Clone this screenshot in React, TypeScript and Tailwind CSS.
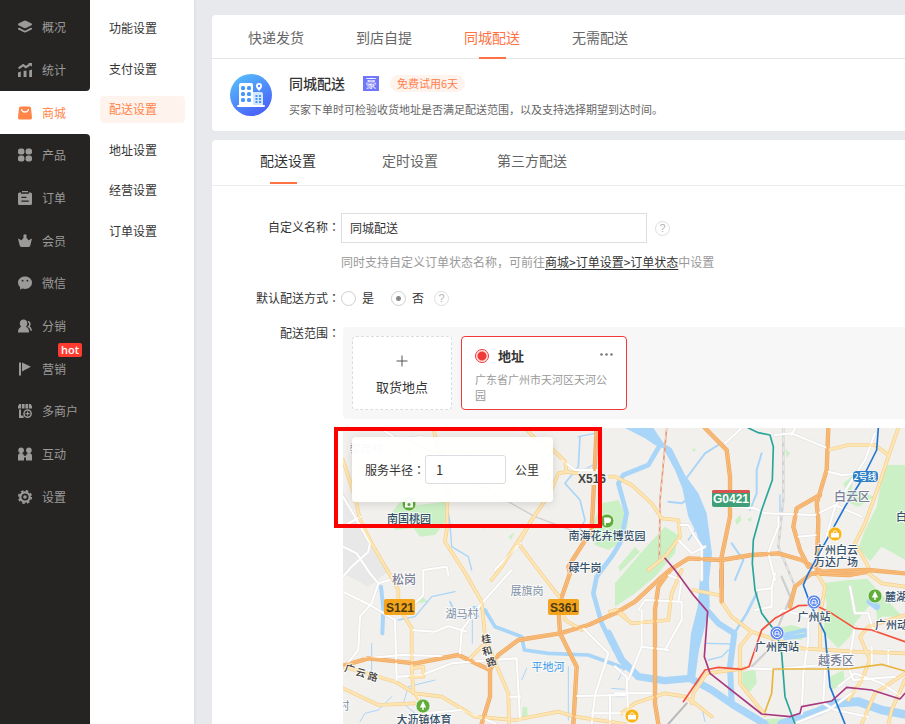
import { useState } from 'react'
import type { ReactNode } from 'react'
import clsx from 'clsx'

type NavItem = {
  label: string
  icon: ReactNode
  badge?: string
}

type RoadKind = 'highway' | 'main' | 'street'

type MapLabel = {
  text: string
  x: number
  y: number
  kind: 'poi' | 'area' | 'village' | 'river' | 'road'
  anchor?: 'start' | 'middle'
  rotate?: number
}

const navItems: NavItem[] = [
  {
    label: '概况',
    icon: (
      <>
        <path d="M5.500.9a3.400 3.400 0 0 1 3 0l5 2.700a.9.9 0 0 1 0 1.600l-5 2.600a3.400 3.400 0 0 1-3 0l-5-2.600a.9.9 0 0 1 0-1.600Z" />
        <path d="M.9 8.700 5.400 11a3.400 3.400 0 0 0 3.200 0l4.500-2.300" fill="none" stroke="currentColor" strokeWidth="1.900" strokeLinecap="round" />
      </>
    )
  },
  {
    label: '统计',
    icon: (
      <>
        <path d="M.6 5.400 5.200 2.200l2.600 1.900L12.400 1.200" fill="none" stroke="currentColor" strokeWidth="2.200" />
        <path d="M10 0h4v3.800ZM0 9.400 2.800 8.400V14H0ZM5.600 7.800h2.900V14H5.600ZM11.200 7.400l2.800-1V14h-2.800Z" />
      </>
    )
  },
  {
    label: '商城',
    icon: (
      <>
        <path d="M2.600.6h8.800a1.600 1.600 0 0 1 1.600 1.500l1 9.400a2 2 0 0 1-2 2.100H2a2 2 0 0 1-2-2.100l1-9.400A1.600 1.600 0 0 1 2.600.6Z" />
        <path d="M3.600 3.600c.9 3.200 5.900 3.200 6.800 0" fill="none" stroke="#fff" strokeWidth="1.300" strokeLinecap="round" />
      </>
    )
  },
  {
    label: '产品',
    icon: (
      <>
        <rect x="0" y="0.4" width="6.4" height="6.2" rx="2.4" />
        <rect x="7.6" y="0.4" width="6.4" height="6.2" rx="2.4" />
        <rect x="0" y="7.4" width="6.4" height="6.2" rx="2.4" />
        <rect x="7.6" y="7.4" width="6.4" height="6.2" rx="2.4" />
      </>
    )
  },
  {
    label: '订单',
    icon: (
      <>
        <path d="M4 0h6v1.400h2.400A1.600 1.600 0 0 1 14 3v9.400a1.600 1.600 0 0 1-1.600 1.600H1.600A1.600 1.600 0 0 1 0 12.400V3a1.600 1.600 0 0 1 1.600-1.600H4Z" />
        <path d="M3 2h8M3.400 6.300h5M3.400 10.200h7.400" stroke="#262422" strokeWidth="1.300" />
      </>
    )
  },
  {
    label: '会员',
    icon: (
      <>
        <circle cx="7" cy="2" r="1.700" />
        <path d="M0 4.400 3.600 6.300 6 3h2l2.400 3.300L14 4.400l-1.700 7.200a1.800 1.800 0 0 1-1.700 1.400H3.400a1.800 1.800 0 0 1-1.700-1.400Z" />
      </>
    )
  },
  {
    label: '微信',
    icon: (
      <>
        <path d="M7 .6c3.900 0 7 2.700 7 6.100s-3.100 6.200-7 6.200c-1 0-2-.2-2.800-.5L2.200 13.800l-.1-2.600A5.800 5.800 0 0 1 0 6.700C0 3.300 3.100.6 7 .6Z" />
        <circle cx="4.6" cy="4.700" r=".9" fill="#262422" />
        <circle cx="9.400" cy="4.700" r=".9" fill="#262422" />
      </>
    )
  },
  {
    label: '分销',
    icon: (
      <>
        <path d="M5.600.4c2.200 0 3.700 1.600 3.700 3.800 0 1.500-.6 2.800-1.500 3.600 2.200.7 3.300 2.400 3.300 5.700H0c0-3.300 1.200-5 3.300-5.700-.9-.8-1.500-2.100-1.500-3.600C1.800 2 3.400.4 5.600.4Z" />
        <path d="M9.800 2.400c2.700.6 2.600 3.600.8 5.100 1.700.8 2.500 2.100 2.700 4.200" fill="none" stroke="currentColor" strokeWidth="1.500" />
      </>
    )
  },
  {
    label: '营销',
    badge: 'hot',
    icon: <path d="M1 .4h2v13.200H1ZM4 .4 13 4.700 4 9.600Z" />
  },
  {
    label: '多商户',
    icon: (
      <>
        <path d="M1.200 0h1.900v4.600H0V2.500ZM3.900 0h2.700v4.600H3.900ZM7.400 0h2.700v4.600H7.400ZM10.900 0h1.900L14 2.500v2.100h-3.100ZM1 5.400h2v6.200h2.600V14H1Z" />
        <circle cx="9.600" cy="9.600" r="3.600" fill="none" stroke="currentColor" strokeWidth="1.500" />
        <path d="M9.600 7.600v4M7.600 9.600h4" stroke="currentColor" strokeWidth="1.200" />
      </>
    )
  },
  {
    label: '互动',
    icon: (
      <>
        <circle cx="3.100" cy="3.200" r="2.800" />
        <circle cx="10.900" cy="3.200" r="2.800" />
        <path d="M0 9.500a3 3 0 0 1 6-.8h2a3 3 0 0 1 6 .8v4H8v-3H6v3H0Z" />
      </>
    )
  },
  {
    label: '设置',
    icon: (
      <>
        <circle cx="7" cy="7" r="4.700" fill="none" stroke="currentColor" strokeWidth="2.200" />
        <circle cx="7" cy="7" r="6.200" fill="none" stroke="currentColor" strokeWidth="1.700" strokeDasharray="2.600 2.270" />
        <circle cx="7" cy="7" r="1.800" />
      </>
    )
  }
]

const subItems = ['功能设置', '支付设置', '配送设置', '地址设置', '经营设置', '订单设置']
const deliveryTabs = ['快递发货', '到店自提', '同城配送', '无需配送']
const settingTabs = ['配送设置', '定时设置', '第三方配送']

// Map geometry, drawn on a grid three times finer than the screen
const parks = [
  'M160 290 200 240 250 255 330 245 335 300 300 345 255 350 235 325 180 330Z',
  'M375 110 400 95 440 120 430 140Z',
  'M770 320 800 250 850 240 880 300 870 360 820 390 780 375Z',
  'M840 490 925 390 990 320 1030 345 1020 400 960 470 900 520 840 560Z',
  'M1648 135 1710 135 1710 870 1650 850 1610 430 1570 385 1590 330 1625 260Z',
  'M1460 490 1540 480 1630 475 1600 560 1560 610 1545 650 1510 685 1465 640 1475 550Z',
  'M1222 755 1262 750 1265 790 1245 815 1222 800Z',
  'M1485 770 1525 750 1530 790 1490 810Z',
  'M1285 898 1365 893 1365 915 1280 915Z',
  'M1525 190 1555 165 1550 210 1620 230 1570 260 1545 250Z',
  'M245 550 255 525 280 545Z',
  'M563 860 577 862 577 895 560 900Z',
  'M1595 720 1625 705 1680 710 1665 735 1610 735Z',
  'M1325 625 1370 615 1420 630 1400 660 1340 655Z',
  'M855 455 850 440 900 380 915 395Z',
  'M1200 300 1215 285 1220 300 1205 315Z',
  'M1070 90 1082 84 1080 96Z',
  'M520 350 540 335 528 360Z',
  'M1350 85 1365 100 1355 115Z',
  'M1235 300 1250 290 1248 305Z',
  'M440 320 450 316 446 328Z'
]

// The built-up strip east of the hill park, laid over the green
const parkCutouts = [
  'M1655 450 1712 450 1712 490 1660 490Z',
  'M1640 590 1712 590 1712 915 1560 915 1575 650Z',
  'M1600 430 1640 380 1712 420 1712 600 1600 480Z'
]

const riverBanks = [
  'M870 24 930 55 960 75 985 85 1020 150 1042 205 1060 290 1085 340 1103 400 1095 470 1088 560 1068 640 1056 770 1080 778 1092 690 1112 610 1124 560 1122 480 1131 400 1115 280 1090 220 1050 165 1010 85 985 68 955 24Z'
]

const rivers = [
  { d: 'M820 640 860 720 910 770 990 782 1065 775 1130 810 1195 855 1290 912', width: 22 },
  { d: 'M975 75 940 135 865 165 850 190 875 280 855 370 830 410 785 470 775 520 800 610 840 690', width: 14 },
  { d: 'M1115 570 1150 610 1198 640 1185 740 1190 850', width: 18 },
  { d: 'M1198 640 1235 580 1265 520', width: 8 },
  { d: 'M450 570 480 620 560 650 568 690 640 700 760 705 870 745', width: 11 },
  { d: 'M1050 180 1110 100 1150 75', width: 6 },
  { d: 'M1060 235 1040 250 1000 245', width: 6 },
  { d: 'M1280 100 1265 150 1265 220 1245 270', width: 6 },
  { d: 'M1190 370 1225 420 1200 480', width: 6 },
  { d: 'M1095 310 1060 360', width: 4 },
  { d: 'M1345 645 1390 635 1410 630 1420 645 1350 655', width: 12 },
  { d: 'M1340 912 1450 875 1500 850 1570 845 1640 870 1720 885', width: 26 },
  { d: 'M1605 545 1625 560', width: 20 },
  { d: 'M150 30 200 70 240 120', width: 4 },
  { d: 'M735 50 730 140 690 190 735 240 750 300 735 330', width: 5 },
  { d: 'M730 50 780 40M735 155 775 135', width: 4 },
  { d: 'M620 110 640 170 625 200', width: 4 },
  { d: 'M335 245 345 310 350 380 400 410 410 450', width: 4 },
  { d: 'M138 500 145 565 142 640', width: 12 },
  { d: 'M190 600 240 590 290 530 360 515', width: 4 },
  { d: 'M345 545 365 590 430 590 415 560 455 570', width: 5 },
  { d: 'M412 600 412 670M110 670 110 760M300 780 220 800 205 850 240 880', width: 3 },
  { d: 'M700 740 700 900M575 745 560 780M830 805 868 808M840 830 865 830', width: 3 },
  { d: 'M1335 225 1335 290M1115 670 1190 672M1120 720 1160 710 1180 690', width: 4 },
  { d: 'M75 905 90 880 130 870 170 830', width: 3 },
  { d: 'M1060 840 1100 865M870 740 850 780M1100 860 1110 905', width: 3 }
]

const roads: { d: string; kind: RoadKind }[] = [
  { kind: 'street', d: 'M24 230 60 290 105 370 100 395 50 440 24 470' },
  { kind: 'street', d: 'M40 310 78 290M24 380 65 400 105 460 130 490 165 480' },
  { kind: 'street', d: 'M110 80 180 110 200 150 215 210M135 24 190 60 260 50' },
  { kind: 'street', d: 'M24 515 105 555 180 600 185 780' },
  { kind: 'street', d: 'M130 490 110 550 75 590 70 690 30 740' },
  { kind: 'street', d: 'M265 450 265 525 225 565M265 450 335 440 340 465' },
  { kind: 'street', d: 'M530 450 440 550 380 630 375 700M230 630 300 635 340 618 395 635' },
  { kind: 'street', d: 'M190 770 260 765 350 730 545 715 555 900M90 715 200 705 320 708' },
  { kind: 'street', d: 'M250 830 270 880 380 870 480 910M525 830 555 830' },
  { kind: 'street', d: 'M725 828 870 825M770 912 780 825 820 700 740 620M825 825 825 912M770 880 870 880' },
  { kind: 'street', d: 'M555 370 480 450M680 120 720 150 790 150' },
  { kind: 'street', d: 'M1170 70 1220 24M1320 45 1370 40 1480 85M1370 45 1380 24' },
  { kind: 'street', d: 'M1480 155 1520 165 1590 160M1190 260 1260 265 1290 280 1440 285 1500 255 1580 290' },
  { kind: 'street', d: 'M1620 40 1590 120 1500 260 1460 400 1435 450' },
  { kind: 'street', d: 'M1330 290 1330 320 1310 370 1300 400 1320 480M1390 350 1445 345' },
  { kind: 'street', d: 'M1030 315 1060 315 1080 350 1100 380 1100 480M1030 360 1070 400 1110 380' },
  { kind: 'street', d: 'M840 740 875 770 880 900M840 820 950 820M910 570 930 540 1040 545 1040 600 990 690' },
  { kind: 'street', d: 'M920 570 920 680 880 780M920 680 1000 690M1000 465 1040 480 1030 545' },
  { kind: 'street', d: 'M1265 510 1310 505 1320 460M1310 505 1310 560 1260 570' },
  { kind: 'street', d: 'M1420 600 1420 660 1405 760 1400 880M1230 745 1320 748 1460 735' },
  { kind: 'street', d: 'M1470 745 1465 850 1500 870 1600 890M1540 740 1555 780 1680 770' },
  { kind: 'street', d: 'M1510 800 1560 760 1640 790 1700 830M1380 910 1480 870 1570 805' },
  { kind: 'street', d: 'M1545 500 1560 580 1600 580 1615 630M1540 740 1560 620' },
  { kind: 'street', d: 'M1320 600 1340 570 1420 590M1610 680 1610 740M1660 690 1660 740' },

  { kind: 'main', d: 'M24 120 60 230 75 300 110 370 165 465 190 510 190 560 230 625 230 740 235 820' },
  { kind: 'main', d: 'M295 24 310 90 340 130 335 330 330 365 385 450 440 545 450 650 490 750 520 820 522 912' },
  { kind: 'main', d: 'M570 24 605 60 650 85 690 125 695 155 670 160 645 220 590 300 550 370 610 450 680 540 690 600 740 630' },
  { kind: 'main', d: 'M690 155 800 170 840 170 890 195 950 250 980 295 1030 300 1035 350 990 410 940 450' },
  { kind: 'main', d: 'M590 300 500 440 470 480' },
  { kind: 'main', d: 'M24 740 60 750 180 785 240 820 320 830 420 890 540 900 670 875 720 890 870 912' },
  { kind: 'main', d: 'M24 805 130 855 240 850M400 720 450 670M240 820 265 860 265 912' },
  { kind: 'main', d: 'M230 745 265 740 265 770 225 770M825 575 850 570 870 590' },
  { kind: 'main', d: 'M840 570 890 610 1000 600 1010 520 1040 450M1075 510 1150 525' },
  { kind: 'main', d: 'M1480 90 1540 75 1620 75 1660 105M1690 24 1660 110 1630 200 1590 310 1560 370 1600 440' },
  { kind: 'main', d: 'M1160 545 1190 590 1250 635 1215 680 1215 790 1290 885' },
  { kind: 'main', d: 'M1250 635 1400 685 1560 695 1710 700M1455 560 1455 685M1600 460 1640 490 1710 500' },
  { kind: 'main', d: 'M1710 585 1600 620 1575 650 1605 720 1580 780 1540 840M1710 760 1620 820 1580 912' },
  { kind: 'main', d: 'M1710 780 1670 870 1660 912M860 880 900 850 990 820 1050 830 1080 850 1130 890' },
  { kind: 'main', d: 'M1070 850 1075 820 1115 760 1230 745M1445 460 1470 500 1460 560' },

  { kind: 'highway', d: 'M785 24 775 230 770 330 700 440 705 460 670 560 675 640 725 740 715 912' },
  { kind: 'highway', d: 'M24 737 100 715 240 730 370 705 465 750 490 705 550 660 675 640 760 615 840 580 900 545 970 480 1005 450 1060 415 1160 420 1250 405 1330 400 1400 420 1460 455 1600 450 1710 460' },
  { kind: 'highway', d: 'M465 750 465 830 440 912' },
  { kind: 'highway', d: 'M1110 24 1175 90 1185 170 1185 290 1160 410 1160 545' },
  { kind: 'highway', d: 'M1480 24 1475 150 1445 250 1450 300 1445 460' },
  { kind: 'highway', d: 'M1455 225 1385 265 1375 320 1395 390 1420 440' },
  { kind: 'highway', d: 'M1005 450 970 500 960 570 960 850 970 912' },
  { kind: 'highway', d: 'M1365 560 1380 500 1430 460 1540 465 1600 455' }
]

const metroLines = [
  { color: '#2aa59a', d: 'M1240 24 1270 38 1305 45 1315 80 1312 180 1280 270 1255 360 1252 430 1260 510 1280 580 1325 640 1340 700 1350 830 1380 912' },
  { color: '#2376d2', d: 'M1630 24 1625 90 1580 180 1530 260 1420 460 1405 495 1425 550 1470 640 1485 800 1530 912' },
  { color: '#f4513b', d: 'M1045 845 1110 750 1150 742 1220 748 1242 740 1280 630 1320 595 1390 557 1440 555 1490 580 1560 625 1610 630 1710 665' },
  { color: '#a83a80', d: 'M990 415 1020 450 1075 525 1118 575 1108 710 1125 760 1280 882 1365 890 1395 880 1400 860 1490 843 1535 802 1610 810 1695 837 1710 820' },
  { color: '#e8b53e', d: 'M1290 875 1310 820 1315 747 1540 747 1640 733 1710 753' }
]

// Label positions are in screen pixels from the map's corner
const mapLabels: MapLabel[] = [
  { text: '黎岗村', x: 23, y: 20, kind: 'village' },
  { text: '南国桃园', x: 66, y: 90, kind: 'poi' },
  { text: '南海花卉博览园', x: 264, y: 107, kind: 'poi' },
  { text: '碌牛岗', x: 242, y: 139, kind: 'poi' },
  { text: '松岗', x: 61, y: 150, kind: 'area' },
  { text: '展旗岗', x: 184, y: 162, kind: 'village' },
  { text: '湖马村', x: 119, y: 185, kind: 'village' },
  { text: '村', x: 1, y: 277, kind: 'village' },
  { text: '平地河', x: 205, y: 238, kind: 'river' },
  { text: '桂', x: 143, y: 210, kind: 'road', rotate: -8 },
  { text: '和', x: 144, y: 222, kind: 'road', rotate: -15 },
  { text: '路', x: 148, y: 233, kind: 'road', rotate: -20 },
  { text: '广', x: 7, y: 240, kind: 'road', rotate: 15 },
  { text: '云', x: 18, y: 244, kind: 'road', rotate: 15 },
  { text: '路', x: 30, y: 248, kind: 'road', rotate: 15 },
  { text: '大沥镇体育', x: 81, y: 291, kind: 'poi' },
  { text: '白云区', x: 509, y: 67, kind: 'area' },
  { text: '越秀区', x: 493, y: 231, kind: 'area' },
  { text: '白云山', x: 553, y: 88, kind: 'poi', anchor: 'start' },
  { text: '广州白云', x: 493, y: 121, kind: 'poi' },
  { text: '万达广场', x: 493, y: 133, kind: 'poi' },
  { text: '麓湖公园', x: 542, y: 168, kind: 'poi', anchor: 'start' },
  { text: '广州站', x: 471, y: 188, kind: 'poi' },
  { text: '广州动物园', x: 532, y: 196, kind: 'poi', anchor: 'start' },
  { text: '广州西站', x: 434, y: 218, kind: 'poi' }
]

const labelStyles: Record<MapLabel['kind'], string> = {
  poi: 'fill-[#34506a] text-[11px] font-medium',
  area: 'fill-[#7a8097] text-[12px] font-medium',
  village: 'fill-[#8290a6] text-[11px]',
  river: 'fill-[#3397e8] text-[11px]',
  road: 'fill-[#3a3a3a] text-[10px] font-medium'
}

const roadStyles: Record<RoadKind, { casing: string; fill: string; width: number }> = {
  street: { casing: '#e6e4e2', fill: '#ffffff', width: 7 },
  main: { casing: '#f5cf8c', fill: '#fde6b4', width: 8 },
  highway: { casing: '#efa65a', fill: '#f9bf80', width: 10 }
}

function Colon() {
  return <span className="font-['Noto_Sans_CJK_JP',sans-serif]">：</span>
}

function HelpIcon() {
  return (
    <button
      type="button"
      aria-label="帮助"
      className="flex size-[15px] items-center justify-center rounded-full border border-[#dedede] font-['Liberation_Sans',sans-serif] text-[11px] leading-none text-[#b5b5b5]"
    >
      ?
    </button>
  )
}

function Marker({ x, y, color, kind }: { x: number; y: number; color: string; kind: 'tree' | 'camera' | 'bag' | 'metro' | 'leaf' }) {
  return (
    <g transform={`translate(${x} ${y})`}>
      <circle r="7" fill={color} stroke="#fff" strokeOpacity=".7" />
      {kind === 'tree' && <path d="M0-5 3.200 1.500H.7V4H-.7V1.500H-3.200Z" fill="#fff" />}
      {kind === 'leaf' && <path d="M-3-3.500H1.500A2.500 2.500 0 0 1 1 2H-1V4.500H-2.500Z" fill="#fff" />}
      {kind === 'camera' && (
        <>
          <path d="M-4-2.500h2l1-1.500h2l1 1.500h2v6h-8Z" fill="#fff" />
          <circle r="1.500" cy=".4" fill={color} />
        </>
      )}
      {kind === 'bag' && (
        <>
          <path d="M-4-1h8v4.500h-8Z" fill="#fff" />
          <path d="M-2-1c0-3 4-3 4 0" fill="none" stroke="#fff" />
        </>
      )}
      {kind === 'metro' && (
        <>
          <circle r="4.500" fill="none" stroke="#fff" />
          <path d="M-2 2.500V0a2 2 0 0 1 4 0v2.500M-2 1h4" fill="none" stroke="#fff" />
        </>
      )}
    </g>
  )
}

function CityMap() {
  return (
    <svg className="block h-full w-full bg-[#f2f0ed] font-['Noto_Sans_CJK_SC',sans-serif]" role="img" aria-label="配送范围地图">
      <g transform="scale(.33333) translate(-24 -24)" fill="none" strokeLinejoin="round" strokeLinecap="round">
        <path d="M24 210 60 290 110 370 165 450 100 500 24 460Z" fill="#e8e8e8" />
        {parks.map((d) => (
          <path key={d} d={d} fill="#ccf0c6" />
        ))}
        {parkCutouts.map((d) => (
          <path key={d} d={d} fill="#f2f0ed" />
        ))}
        {riverBanks.map((d) => (
          <path key={d} d={d} fill="#a9d5f8" />
        ))}
        {rivers.map((river) => (
          <path key={river.d} d={river.d} stroke="#a9d5f8" strokeWidth={river.width} />
        ))}

        {/* Railways */}
        <path d="M220 60 320 110 440 200 600 290 760 350" stroke="#d0cfce" strokeWidth="4" />
        <path d="M1345 24 1345 240 1330 380 1380 500 1300 690 1250 740M1340 470 1370 540" stroke="#cfcfcf" strokeWidth="7" />
        <path d="M1345 24 1345 240 1330 380 1380 500" stroke="#e8e8e8" strokeWidth="4" strokeDasharray="14 14" />
        <path d="M995 24 975 240 973 420" stroke="#e39a75" strokeWidth="5" />
        <path d="M995 24 975 240 973 420" stroke="#f7e0d2" strokeWidth="3" strokeDasharray="10 14" />
        <path d="M1160 450 1160 500" stroke="#a7a7b2" strokeWidth="14" />
        <path d="M940 450 985 415M1055 850 1000 912" stroke="#b9b9bd" strokeWidth="6" />

        {roads.map(({ d, kind }) => (
          <path key={d} d={d} stroke={roadStyles[kind].casing} strokeWidth={roadStyles[kind].width + 3} />
        ))}
        {roads.map(({ d, kind }) => (
          <path key={d} d={d} stroke={roadStyles[kind].fill} strokeWidth={roadStyles[kind].width - 1} />
        ))}
        {roads
          .filter((road) => road.kind === 'highway')
          .map(({ d }) => (
            <path key={d} d={d} stroke="#efa65a" strokeWidth="2" />
          ))}
        {metroLines.map((line) => (
          <path key={line.color} d={line.d} stroke={line.color} strokeWidth="5" />
        ))}
      </g>

      {/* Road shields */}
      <g className="font-['Liberation_Sans',sans-serif]" textAnchor="middle">
        <rect x="41" y="171" width="31" height="16" rx="2" fill="#f3a41c" />
        <text x="57" y="184" className="fill-[#4a3a12] text-[12px] font-bold">S121</text>
        <rect x="205" y="171" width="31" height="16" rx="2" fill="#f3a41c" />
        <text x="221" y="184" className="fill-[#4a3a12] text-[12px] font-bold">S361</text>
        <rect x="369" y="62" width="38" height="17" rx="2" fill="#3e9f78" />
        <path d="M371 62h34a2 2 0 0 1 2 2v1h-38v-1a2 2 0 0 1 2-2Z" fill="#d9534f" />
        <text x="388" y="75" className="fill-white text-[12px] font-bold">G0421</text>
        <rect x="235" y="43" width="30" height="14" rx="2" fill="#f2f0ed" />
        <text x="249" y="55" className="fill-[#444444] text-[12px] font-bold">X516</text>
      </g>
      <rect x="510" y="43" width="25" height="11" rx="4" fill="#2f7fc6" />
      <text x="522" y="52" textAnchor="middle" className="fill-white text-[9px] font-medium">2号线</text>

      <Marker x={66} y={76} color="#5fae3a" kind="camera" />
      <Marker x={264} y={93} color="#5fae3a" kind="leaf" />
      <Marker x={80} y={278} color="#5fae3a" kind="tree" />
      <Marker x={532} y={168} color="#5fae3a" kind="tree" />
      <Marker x={492} y={106} color="#f9b416" kind="bag" />
      <Marker x={289} y={288} color="#f9b416" kind="bag" />
      <Marker x={471} y={174} color="#5b86ee" kind="metro" />
      <Marker x={434} y={205} color="#5b86ee" kind="metro" />

      {mapLabels.map(({ text, x, y, kind, anchor = 'middle', rotate = 0 }) => (
        <text
          key={`${text}-${x}`}
          x={x}
          y={y}
          textAnchor={anchor}
          dominantBaseline="central"
          transform={`rotate(${rotate} ${x} ${y})`}
          className={labelStyles[kind]}
          stroke="#ffffff"
          strokeWidth="2"
          strokeOpacity=".7"
          paintOrder="stroke"
        >
          {text}
        </text>
      ))}
    </svg>
  )
}

function Sidebar() {
  return (
    <nav className="w-[90px] shrink-0 bg-[#262422]">
      <ul className="mt-[6px] grid h-[512px] grid-rows-12">
        {navItems.map((item) => {
          const active = item.label === '商城'
          return (
            <li key={item.label} className={clsx('relative', active && 'bg-white')}>
              {active && (
                <>
                  <span className="absolute -top-1 right-0 size-1 bg-white">
                    <span className="block size-1 rounded-br bg-[#262422]" />
                  </span>
                  <span className="absolute right-0 -bottom-1 size-1 bg-white">
                    <span className="block size-1 rounded-tr bg-[#262422]" />
                  </span>
                </>
              )}
              <a
                href="#"
                className={clsx(
                  'flex h-full items-center gap-[10px] pl-[18px] text-[12px] whitespace-nowrap',
                  active ? 'text-[#ff8549]' : 'text-[#9b9a99]'
                )}
              >
                <svg viewBox="0 0 14 14" className="size-[14px] shrink-0 fill-current">
                  {item.icon}
                </svg>
                {item.label}
              </a>
              {item.badge && (
                <span className="absolute -top-1 right-2 rounded-[2px] bg-[#ff3b30] px-[3px] font-['Open_Sans',sans-serif] text-[11px] leading-[14px] font-semibold text-white">
                  {item.badge}
                </span>
              )}
            </li>
          )
        })}
      </ul>
    </nav>
  )
}

function SubMenu() {
  return (
    <nav className="w-[104px] shrink-0 bg-white px-[10px] shadow-[1px_0_3px_rgba(0,0,0,0.06)]">
      <ul className="mt-[15px] flex h-[230px] flex-col justify-between">
        {subItems.map((label) => (
          <li key={label}>
            <a
              href="#"
              className={clsx(
                'block w-[85px] rounded-[4px] pb-[2px] pl-[9px] text-[12px] leading-[25px]',
                label === '配送设置' ? 'bg-[#fff3ee] text-[#ff8549]' : 'text-[#333333]'
              )}
            >
              {label}
            </a>
          </li>
        ))}
      </ul>
    </nav>
  )
}

function BuildingIcon() {
  return (
    <svg viewBox="0 0 42 42" className="size-[42px] shrink-0">
      <defs>
        <linearGradient id="building-bg" x1="0" y1="0" x2="0.6" y2="1">
          <stop offset="0" stopColor="#56c6fb" />
          <stop offset="1" stopColor="#4a63f8" />
        </linearGradient>
      </defs>
      <circle cx="21" cy="21" r="21" fill="url(#building-bg)" />
      <path d="M11 9h10a2 2 0 0 1 2 2v20h11a1 1 0 0 1 0 2H8a1 1 0 0 1 0-2h1V11a2 2 0 0 1 2-2Z" fill="#fff" />
      <path d="M23 18h8a2 2 0 0 1 2 2v11H23Z" fill="#d5e6ff" />
      <g fill="#4597fa">
        <rect x="11" y="12" width="4" height="4" rx="1.500" />
        <rect x="17" y="12" width="4" height="4" rx="1.500" />
        <rect x="11" y="18" width="4" height="4" rx="1.500" />
        <rect x="17" y="18" width="4" height="4" rx="1.500" />
        <rect x="11" y="24" width="4" height="4" rx="1.500" />
        <rect x="17" y="24" width="4" height="4" rx="1.500" />
        <path d="M25.500 21h2v2h-2ZM29 21h2v2h-2ZM25.500 24h2v2h-2ZM29 24h2v2h-2ZM25.500 27h2v2h-2ZM29 27h2v2h-2Z" />
      </g>
      <path d="M29 9a3 3 0 0 1 3 3c0 2-3 5-3 5s-3-3-3-5a3 3 0 0 1 3-3Z" fill="#fff" />
      <circle cx="29" cy="12" r="1.200" fill="#4f8cf9" />
    </svg>
  )
}

export default function App() {
  const [deliveryTab, setDeliveryTab] = useState('同城配送')
  const [settingTab, setSettingTab] = useState('配送设置')
  const [isDefault, setIsDefault] = useState(false)
  const [name, setName] = useState('同城配送')
  const [radius, setRadius] = useState('1')

  return (
    <div className="flex h-screen overflow-hidden bg-[#e8e9ed] font-['Noto_Sans_CJK_SC',sans-serif] text-[12px] text-[#333333]">
      <Sidebar />
      <SubMenu />

      <main className="flex min-w-0 flex-1 flex-col gap-[9px] pt-[15px] pl-[18px]">
        <section className="rounded-l-[4px] bg-white">
          <div className="flex h-[44px] border-b border-[#e6e6e6] pl-[10px]">
            {deliveryTabs.map((tab) => (
              <button
                key={tab}
                type="button"
                onClick={() => setDeliveryTab(tab)}
                className={clsx(
                  'relative h-[44px] w-[108px] text-[14px]',
                  tab === deliveryTab ? 'text-[#ff7243]' : 'text-[#666666]'
                )}
              >
                {tab}
                {tab === deliveryTab && <span className="absolute inset-x-0 bottom-0 mx-auto h-[2px] w-[27px] bg-[#ff7243]" />}
              </button>
            ))}
          </div>
          <div className="flex h-[72px] items-center gap-[17px] pl-[18px]">
            <BuildingIcon />
            <div className="flex flex-col gap-[6px] pt-[2px]">
              <div className="flex items-center">
                <h1 className="text-[14px] leading-[20px] font-medium">同城配送</h1>
                <span className="ml-[18px] flex h-[15px] w-4 items-center justify-center bg-[#6f76fb] text-[11px] leading-none text-white">豪</span>
                <span className="ml-[11px] rounded-full bg-[#fff3ee] px-[7px] text-[11px] leading-[17px] text-[#ff7f4d]">免费试用6天</span>
              </div>
              <p className="text-[11px] leading-[20px] whitespace-nowrap text-[#666666]">
                买家下单时可检验收货地址是否满足配送范围，以及支持选择期望到达时间。
              </p>
            </div>
          </div>
        </section>

        <section className="flex min-h-0 flex-1 flex-col rounded-tl-[4px] bg-white">
          <div className="flex h-[46px] shrink-0 border-b border-[#ececec] pl-[15px]">
            {settingTabs.map((tab) => (
              <button
                key={tab}
                type="button"
                onClick={() => setSettingTab(tab)}
                className={clsx(
                  'relative h-[44px] w-[122px] pb-[3px] text-[14px]',
                  tab === settingTab ? 'text-[#333333]' : 'text-[#666666]'
                )}
              >
                {tab}
                {tab === settingTab && <span className="absolute bottom-0 left-[43px] h-[2px] w-[27px] bg-[#ff7243]" />}
              </button>
            ))}
          </div>

          <form className="flex min-h-0 flex-1 flex-col pt-[27px]">
            <div className="flex items-start">
              <label htmlFor="custom-name" className="w-[129px] shrink-0 pr-px text-right leading-[28px]">
                自定义名称<Colon />
              </label>
              <div>
                <div className="flex items-center gap-2">
                  <input
                    id="custom-name"
                    value={name}
                    onChange={(e) => setName(e.target.value)}
                    className="h-[30px] w-[306px] border border-[#dcdde3] px-2 pb-[2px] outline-none"
                  />
                  <HelpIcon />
                </div>
                <p className="mt-[9px] leading-[20px] whitespace-nowrap text-[#999999]">
                  同时支持自定义订单状态名称，可前往
                  <a href="#" className="text-[#333333] underline underline-offset-2">商城&gt;订单设置&gt;订单状态</a>
                  中设置
                </p>
              </div>
            </div>

            <fieldset className="mt-[16px] flex items-center leading-[20px]">
              <legend className="float-left w-[129px] pr-px text-right">
                默认配送方式<Colon />
              </legend>
              <label className="flex items-center gap-[6px]">
                <input
                  type="radio"
                  name="default-mode"
                  checked={isDefault}
                  onChange={() => setIsDefault(true)}
                  className="size-[15px] appearance-none rounded-full border border-[#cfcfcf] bg-white checked:bg-[radial-gradient(#888_2px,#fff_3px)]"
                />
                是
              </label>
              <label className="ml-[17px] flex items-center gap-[6px]">
                <input
                  type="radio"
                  name="default-mode"
                  checked={!isDefault}
                  onChange={() => setIsDefault(false)}
                  className="size-[15px] appearance-none rounded-full border border-[#cfcfcf] bg-white checked:bg-[radial-gradient(#888_2px,#fff_3px)]"
                />
                否
              </label>
              <span className="ml-[10px]">
                <HelpIcon />
              </span>
            </fieldset>

            <div className="mt-[15px] flex min-h-0 flex-1">
              <span className="w-[129px] shrink-0 pr-px text-right leading-[20px]">
                配送范围<Colon />
              </span>
              <div className="ml-[2px] flex min-w-0 flex-1 flex-col gap-[9px] pt-[4px]">
                <div className="flex shrink-0 gap-[9px] rounded-l-[4px] bg-[#f7f7f7] p-[9px]">
                  <button
                    type="button"
                    className="flex h-[74px] w-[100px] flex-col items-center justify-center gap-[10px] rounded-[4px] border border-dashed border-[#dddddd] bg-white text-[13px]"
                  >
                    <svg viewBox="0 0 12 12" className="mt-[5px] size-[12px]">
                      <path d="M6 .5v11M.5 6h11" stroke="#555" />
                    </svg>
                    取货地点
                  </button>
                  <div className="flex h-[74px] w-[166px] flex-col rounded-[4px] border border-[#f03a3a] bg-white px-[13px] pt-[9px]">
                    <div className="flex items-center justify-between">
                      <label className="flex items-center gap-[9px] text-[13px] leading-[20px] font-bold">
                        <input
                          type="radio"
                          name="address"
                          defaultChecked
                          className="size-[14px] appearance-none rounded-full border border-[#f03a3a] bg-[radial-gradient(#f03a3a_4px,#ffe3e0_5px)]"
                        />
                        地址
                      </label>
                      <button type="button" aria-label="更多" className="h-5 pb-1">
                        <svg viewBox="0 0 13 3" className="w-[13px] fill-[#777777]">
                          <circle cx="1.500" cy="1.500" r="1.300" />
                          <circle cx="6.500" cy="1.500" r="1.300" />
                          <circle cx="11.500" cy="1.500" r="1.300" />
                        </svg>
                      </button>
                    </div>
                    <p className="mt-[5px] text-[11px] leading-[16px] text-[#999999]">广东省广州市天河区天河公园</p>
                  </div>
                </div>

                <div className="relative min-h-0 flex-1">
                  <CityMap />
                  <div className="absolute top-[9px] left-[9px] flex h-[65px] w-[201px] items-center rounded-[4px] bg-white/95 pl-[13px] shadow-[0_2px_8px_rgba(0,0,0,0.12)]">
                    <label htmlFor="radius" className="whitespace-nowrap">
                      服务半径<Colon />
                    </label>
                    <input
                      id="radius"
                      value={radius}
                      onChange={(e) => setRadius(e.target.value)}
                      className="h-[29px] w-[81px] rounded-[3px] border border-[#dcdde3] bg-white px-[10px] text-[13px] outline-none"
                    />
                    <span className="ml-[9px]">公里</span>
                  </div>
                  <div className="pointer-events-none absolute -top-px -left-[9px] h-[101px] w-[268px] border-4 border-[#ff0000]" />
                </div>
              </div>
            </div>
          </form>
        </section>
      </main>
    </div>
  )
}
